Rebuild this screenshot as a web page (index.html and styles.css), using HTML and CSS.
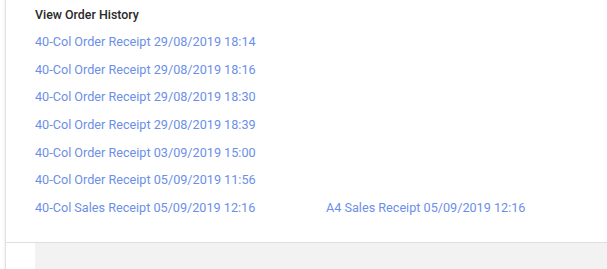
FILE: index.html
```html
<!DOCTYPE html>
<html>
<head>
<meta charset="utf-8">
<link rel="stylesheet" href="styles.css">
</head>
<body>
<div class="page">
  <div class="panel">
    <div class="content">
      <div class="title">View Order History</div>
      <div class="list">
        <a class="link">40-Col Order Receipt 29/08/2019 18:14</a>
        <a class="link">40-Col Order Receipt 29/08/2019 18:16</a>
        <a class="link">40-Col Order Receipt 29/08/2019 18:30</a>
        <a class="link">40-Col Order Receipt 29/08/2019 18:39</a>
        <a class="link">40-Col Order Receipt 03/09/2019 15:00</a>
        <a class="link">40-Col Order Receipt 05/09/2019 11:56</a>
        <div class="pair">
          <a class="link">40-Col Sales Receipt 05/09/2019 12:16</a>
          <a class="link">A4 Sales Receipt 05/09/2019 12:16</a>
        </div>
      </div>
    </div>
    <div class="footer">
      <div class="footer-gap"></div>
      <div class="footer-fill"></div>
    </div>
  </div>
</div>
</body>
</html>
```
FILE: styles.css
```css
html, body {
  margin: 0;
  padding: 0;
  background: #fff;
}
body {
  font-family: Roboto, "Noto Sans", sans-serif;
  width: 607px;
  height: 269px;
  overflow: hidden;
}
.page {
  padding-left: 5px;
}
.panel {
  border-left: 1px solid #e2e2e2;
  box-shadow: -1px 0 2px rgba(0,0,0,0.06);
  height: 269px;
  display: flex;
  flex-direction: column;
}
.content {
  padding: 7px 0 0 29px;
  height: 242px;
  box-sizing: border-box;
}
.title {
  font-size: 12.4px;
  font-weight: 500;
  color: #2a2a2a;
  line-height: 16px;
}
.list {
  display: flex;
  flex-direction: column;
  margin-top: 11px;
  gap: 11.7px;
}
.link {
  display: block;
  font-size: 12.65px;
  line-height: 16px;
  color: #6b8fe8;
  cursor: pointer;
}
.pair {
  display: grid;
  grid-template-columns: 291px auto;
}
.footer {
  flex: 1;
  display: flex;
  border-top: 1px solid #dedede;
}
.footer-gap {
  width: 29px;
  background: #fff;
}
.footer-fill {
  flex: 1;
  background: #f2f2f2;
}
```
